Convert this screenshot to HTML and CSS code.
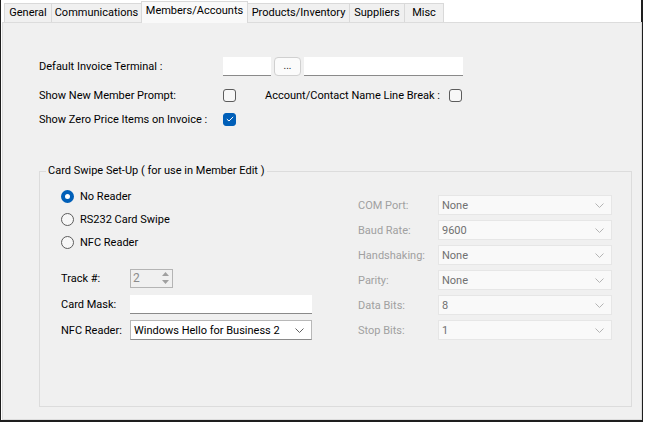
FILE: index.html
```html
<!DOCTYPE html>
<html lang="en">
<head>
    <meta charset="UTF-8">
    <title>Members/Accounts</title>
    <link rel="stylesheet" href="styles.css">
</head>
<body>
    <div class="window">
        <div class="tabs">
            <div class="tab tab-general">General</div>
            <div class="tab tab-comms">Communications</div>
            <div class="tab tab-members active">Members/Accounts</div>
            <div class="tab tab-products">Products/Inventory</div>
            <div class="tab tab-suppliers">Suppliers</div>
            <div class="tab tab-misc">Misc</div>
        </div>

        <div class="panel">
            <div class="options">
                <div class="row row-terminal">
                    <span class="lbl">Default Invoice Terminal :</span>
                    <span class="textbox tb-short"></span>
                    <span class="btn">...</span>
                    <span class="textbox tb-long"></span>
                </div>
                <div class="row">
                    <span class="lbl">Show New Member Prompt:</span>
                    <span class="check"></span>
                    <span class="lbl lbl-break">Account/Contact Name Line Break :</span>
                    <span class="check"></span>
                </div>
                <div class="row">
                    <span class="lbl">Show Zero Price Items on Invoice :</span>
                    <span class="check checked">
                        <svg width="8" height="6" viewBox="0 0 8 6"><path d="M0.8 3.1 L3 5 L7.2 0.9" fill="none" stroke="#fff" stroke-width="1"/></svg>
                    </span>
                </div>
            </div>

            <fieldset class="group">
                <legend>Card Swipe Set-Up ( for use in Member Edit )</legend>
                <div class="group-cols">
                    <div class="col-left">
                        <div class="radios">
                            <div class="radio-row"><span class="radio on"></span>No Reader</div>
                            <div class="radio-row"><span class="radio"></span>RS232 Card Swipe</div>
                            <div class="radio-row"><span class="radio"></span>NFC Reader</div>
                        </div>
                        <div class="fields">
                            <div class="field">
                                <span class="flbl">Track #:</span>
                                <span class="spin">
                                    <span class="spin-val">2</span>
                                    <span class="spin-btns">
                                        <svg width="7" height="4" viewBox="0 0 7 4"><path d="M0 4 L3.5 0 L7 4 Z" fill="#a0a0a0"/></svg>
                                        <svg width="7" height="4" viewBox="0 0 7 4"><path d="M0 0 L3.5 4 L7 0 Z" fill="#a0a0a0"/></svg>
                                    </span>
                                </span>
                            </div>
                            <div class="field">
                                <span class="flbl">Card Mask:</span>
                                <span class="textbox tb-mask"></span>
                            </div>
                            <div class="field">
                                <span class="flbl">NFC Reader:</span>
                                <span class="combo combo-nfc">Windows Hello for Business 2
                                    <svg class="chev" width="9" height="5" viewBox="0 0 9 5"><path d="M0.5 0.5 L4.5 4.5 L8.5 0.5" fill="none" stroke="#606060"/></svg>
                                </span>
                            </div>
                        </div>
                    </div>

                    <div class="col-right">
                        <div class="serial"><span class="slbl">COM Port:</span><span class="combo disabled">None<svg class="chev" width="9" height="5" viewBox="0 0 9 5"><path d="M0.5 0.5 L4.5 4.5 L8.5 0.5" fill="none" stroke="#b4b4b4"/></svg></span></div>
                        <div class="serial"><span class="slbl">Baud Rate:</span><span class="combo disabled">9600<svg class="chev" width="9" height="5" viewBox="0 0 9 5"><path d="M0.5 0.5 L4.5 4.5 L8.5 0.5" fill="none" stroke="#b4b4b4"/></svg></span></div>
                        <div class="serial"><span class="slbl">Handshaking:</span><span class="combo disabled">None<svg class="chev" width="9" height="5" viewBox="0 0 9 5"><path d="M0.5 0.5 L4.5 4.5 L8.5 0.5" fill="none" stroke="#b4b4b4"/></svg></span></div>
                        <div class="serial"><span class="slbl">Parity:</span><span class="combo disabled">None<svg class="chev" width="9" height="5" viewBox="0 0 9 5"><path d="M0.5 0.5 L4.5 4.5 L8.5 0.5" fill="none" stroke="#b4b4b4"/></svg></span></div>
                        <div class="serial"><span class="slbl">Data Bits:</span><span class="combo disabled">8<svg class="chev" width="9" height="5" viewBox="0 0 9 5"><path d="M0.5 0.5 L4.5 4.5 L8.5 0.5" fill="none" stroke="#b4b4b4"/></svg></span></div>
                        <div class="serial"><span class="slbl">Stop Bits:</span><span class="combo disabled">1<svg class="chev" width="9" height="5" viewBox="0 0 9 5"><path d="M0.5 0.5 L4.5 4.5 L8.5 0.5" fill="none" stroke="#b4b4b4"/></svg></span></div>
                    </div>
                </div>
            </fieldset>
        </div>
    </div>
</body>
</html>
```

FILE: styles.css
```css
html, body {
    margin: 0;
    padding: 0;
}

body {
    font-family: Roboto, "Liberation Sans", sans-serif;
    font-size: 11px;
    color: #000;
    background: #fff;
}

.window {
    width: 643px;
    height: 422px;
    border-left: 1px solid #1e1e1e;
    border-right: 2px solid #1e1e1e;
    border-bottom: 2px solid #1e1e1e;
    background: #fff;
    padding: 1px 0 0 1px;
    box-sizing: border-box;
    display: flex;
    flex-direction: column;
}

/* tab strip */
.tabs {
    display: flex;
    align-items: flex-end;
    height: 21px;
    padding-left: 2px;
}

.tab {
    height: 19px;
    line-height: 18px;
    text-align: center;
    background: #f0f0f0;
    border: 1px solid #d9d9d9;
    border-bottom: none;
    box-sizing: border-box;
    margin-right: -1px;
    color: #000;
}

.tab-general { width: 48px; }
.tab-comms { width: 91px; }
.tab-members { width: 107px; }
.tab-products { width: 103px; }
.tab-suppliers { width: 56px; }
.tab-misc { width: 40px; }

.tab.active {
    height: 22px;
    line-height: 18px;
    background: #f9f9f9;
    margin-bottom: -1px;
    position: relative;
    z-index: 1;
}

.panel {
    width: 640px;
    height: 398px;
    background: #f0f0f0;
    border: 1px solid #dcdcdc;
    box-sizing: border-box;
    padding: 0 0 0 36px;
}

/* top options */
.options {
    padding-top: 34px;
}

.row {
    display: flex;
    align-items: center;
    height: 24px;
}

.row-terminal {
    height: 19px;
    margin-bottom: 7px;
}

.lbl {
    width: 184px;
    flex: none;
}

.lbl-break {
    width: 184px;
    margin-left: 29px;
}

.textbox {
    display: inline-block;
    height: 19px;
    background: #fff;
    border-bottom: 1px solid #8a8a8a;
    box-sizing: border-box;
    flex: none;
}

.tb-short {
    width: 48px;
}

.tb-long {
    width: 159px;
}

.btn {
    width: 27px;
    height: 19px;
    margin: 0 3px;
    box-sizing: border-box;
    border: 1px solid #d0d0d0;
    border-radius: 4px;
    background: #fbfbfb;
    color: #1a1a1a;
    font-size: 10px;
    text-align: center;
    line-height: 16px;
}

.check {
    width: 13px;
    height: 13px;
    box-sizing: border-box;
    border: 1px solid #5c5c5c;
    border-radius: 3px;
    background: #f7f7f7;
    display: flex;
    align-items: center;
    justify-content: center;
    flex: none;
}

.check.checked {
    background: #005fb8;
    border-color: #005fb8;
}

/* group box */
.group {
    margin: 33px 9px 0 0;
    height: 243px;
    border: 1px solid #dcdcdc;
    padding: 0;
    box-sizing: border-box;
}

.group legend {
    padding: 0 2px;
    margin-left: 6px;
    line-height: 14px;
}

.group-cols {
    display: flex;
    justify-content: space-between;
    padding: 0 19px 0 21px;
}

.radios {
    padding-top: 7px;
}

.radio-row {
    display: flex;
    align-items: center;
    height: 22px;
    margin-bottom: 1px;
}

.radio {
    width: 13px;
    height: 13px;
    box-sizing: border-box;
    border: 1px solid #5c5c5c;
    border-radius: 50%;
    background: #f7f7f7;
    margin-right: 6px;
}

.radio.on {
    border: 4px solid #005fb8;
    background: #fff;
}

.fields {
    padding-top: 14px;
}

.field {
    display: flex;
    align-items: center;
    height: 20px;
    margin-bottom: 6px;
}

.flbl {
    width: 69px;
}

.spin {
    width: 43px;
    height: 19px;
    box-sizing: border-box;
    border: 1px solid #b4b4b4;
    display: flex;
    justify-content: space-between;
    color: #8c8c8c;
    background: #f0f0f0;
}

.spin-val {
    padding-left: 2px;
    line-height: 17px;
    font-size: 12px;
}

.spin-btns {
    display: flex;
    flex-direction: column;
    justify-content: space-around;
    width: 13px;
    align-items: center;
}

.tb-mask {
    width: 182px;
}

.combo {
    height: 20px;
    box-sizing: border-box;
    border: 1px solid #cfcfcf;
    background: #fff;
    display: flex;
    align-items: center;
    justify-content: space-between;
    padding: 0 7px 0 3px;
}

.combo-nfc {
    width: 182px;
    border-color: #b8b8b8;
    border-bottom-color: #8a8a8a;
}

.col-right {
    padding-top: 17px;
}

.serial {
    display: flex;
    align-items: center;
    height: 20px;
    margin-bottom: 5px;
}

.slbl {
    width: 80px;
    color: #a0a0a0;
}

.combo.disabled {
    width: 174px;
    background: #f9f9f9;
    border-color: #e6e6e6;
    color: #707070;
}
```
